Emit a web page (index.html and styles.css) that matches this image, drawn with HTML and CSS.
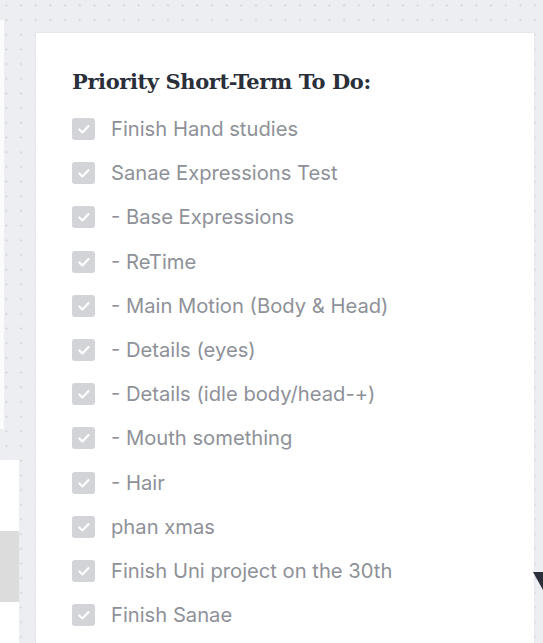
FILE: index.html
```html
<!DOCTYPE html>
<html>
<head>
<meta charset="utf-8">
<link rel="stylesheet" href="styles.css">
</head>
<body>
<div class="page">
  <div class="left-col">
    <div class="left-top"></div>
    <div class="left-bottom"><div class="left-block"></div></div>
  </div>
  <div class="card">
    <h2 class="title">Priority Short-Term To Do:</h2>
    <ul class="todo">
      <li class="item"><span class="box"><svg viewBox="0 0 24 24"><path d="M6.5 12.5l3.6 3.6 7.4-7.6" /></svg></span><span class="label">Finish Hand studies</span></li>
      <li class="item"><span class="box"><svg viewBox="0 0 24 24"><path d="M6.5 12.5l3.6 3.6 7.4-7.6" /></svg></span><span class="label">Sanae Expressions Test</span></li>
      <li class="item"><span class="box"><svg viewBox="0 0 24 24"><path d="M6.5 12.5l3.6 3.6 7.4-7.6" /></svg></span><span class="label">- Base Expressions</span></li>
      <li class="item"><span class="box"><svg viewBox="0 0 24 24"><path d="M6.5 12.5l3.6 3.6 7.4-7.6" /></svg></span><span class="label">- ReTime</span></li>
      <li class="item"><span class="box"><svg viewBox="0 0 24 24"><path d="M6.5 12.5l3.6 3.6 7.4-7.6" /></svg></span><span class="label">- Main Motion (Body &amp; Head)</span></li>
      <li class="item"><span class="box"><svg viewBox="0 0 24 24"><path d="M6.5 12.5l3.6 3.6 7.4-7.6" /></svg></span><span class="label">- Details (eyes)</span></li>
      <li class="item"><span class="box"><svg viewBox="0 0 24 24"><path d="M6.5 12.5l3.6 3.6 7.4-7.6" /></svg></span><span class="label">- Details (idle body/head-+)</span></li>
      <li class="item"><span class="box"><svg viewBox="0 0 24 24"><path d="M6.5 12.5l3.6 3.6 7.4-7.6" /></svg></span><span class="label">- Mouth something</span></li>
      <li class="item"><span class="box"><svg viewBox="0 0 24 24"><path d="M6.5 12.5l3.6 3.6 7.4-7.6" /></svg></span><span class="label">- Hair</span></li>
      <li class="item"><span class="box"><svg viewBox="0 0 24 24"><path d="M6.5 12.5l3.6 3.6 7.4-7.6" /></svg></span><span class="label">phan xmas</span></li>
      <li class="item"><span class="box"><svg viewBox="0 0 24 24"><path d="M6.5 12.5l3.6 3.6 7.4-7.6" /></svg></span><span class="label">Finish Uni project on the 30th</span></li>
      <li class="item"><span class="box"><svg viewBox="0 0 24 24"><path d="M6.5 12.5l3.6 3.6 7.4-7.6" /></svg></span><span class="label">Finish Sanae</span></li>
    </ul>
  </div>
  <svg class="caret" viewBox="0 0 20 18"><polygon points="0,0 20,0 10,18" /></svg>
</div>
</body>
</html>
```
FILE: styles.css
```css
html, body {
  margin: 0;
  padding: 0;
}
body {
  width: 543px;
  height: 643px;
  overflow: hidden;
  background-color: #eceef1;
  background-image: radial-gradient(circle, #d3d6db 0.9px, transparent 1.2px);
  background-size: 14.7px 14.7px;
  background-position: -1px -2px;
}
.page {
  position: relative;
  display: flex;
  align-items: flex-start;
  height: 643px;
}
.left-col {
  width: 19px;
  display: flex;
  flex-direction: column;
  align-items: flex-start;
  height: 643px;
}
.left-top {
  margin-top: 20px;
  width: 4px;
  height: 409px;
  background: #fbfbfc;
}
.left-bottom {
  margin-top: 31px;
  width: 19px;
  flex: 1;
  background: #ffffff;
  padding-top: 71px;
  box-sizing: border-box;
}
.left-block {
  height: 71px;
  background: #dcdcdc;
}
.card {
  margin-left: 17px;
  margin-top: 33px;
  width: 498px;
  height: 610px;
  box-sizing: border-box;
  padding: 35px 36px 0 36px;
  background: #ffffff;
  box-shadow: 0 0 0 1px #e6e8eb;
}
.title {
  margin: 0;
  font-family: "DejaVu Serif", "Liberation Serif", serif;
  font-weight: 700;
  font-size: 21px;
  letter-spacing: -0.4px;
  line-height: 28px;
  color: #2a2f3a;
}
.todo {
  list-style: none;
  margin: 11px 0 0 0;
  padding: 0;
}
.item {
  display: flex;
  align-items: center;
  height: 44.2px;
}
.box {
  width: 23px;
  height: 22px;
  border-radius: 3px;
  background: #d2d4d8;
  display: flex;
  align-items: center;
  justify-content: center;
  flex: none;
}
.box svg {
  width: 20px;
  height: 20px;
  fill: none;
  stroke: #ffffff;
  stroke-width: 2.6;
  stroke-linecap: round;
  stroke-linejoin: round;
}
.label {
  margin-left: 16px;
  font-family: Inter, "Noto Sans", sans-serif;
  font-size: 20.2px;
  color: #8e9198;
  line-height: 24px;
}
.caret {
  position: absolute;
  left: 533px;
  top: 572px;
  width: 20px;
  height: 18px;
  fill: #2a2f3a;
}
```
